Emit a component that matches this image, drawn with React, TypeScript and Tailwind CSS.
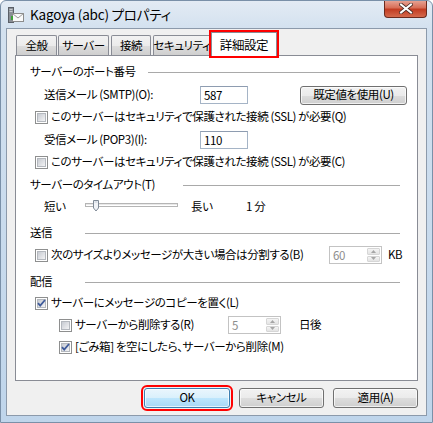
import React from "react";

function CheckBox({ checked = false }: { checked?: boolean }) {
  return (
    <svg width="13" height="13" viewBox="0 0 13 13" className="shrink-0">
      <defs>
        <linearGradient id={checked ? "cbg1" : "cbg0"} x1="0" y1="0" x2="1" y2="1">
          <stop offset="0" stopColor="#c4c8cf" />
          <stop offset="1" stopColor="#f6f6f7" />
        </linearGradient>
      </defs>
      <rect x="0.5" y="0.5" width="12" height="12" fill="#fff" stroke="#8e8f8f" />
      <rect x="2.5" y="2.5" width="8" height="8" fill={`url(#${checked ? "cbg1" : "cbg0"})`} stroke="#b4b8be" />
      {checked && (
        <path d="M3 6.2 L5.2 8.6 L10 3" fill="none" stroke="#3e5a9a" strokeWidth="1.8" />
      )}
    </svg>
  );
}

function Heading({ label, w }: { label: string; w: string }) {
  return (
    <div className="flex items-center pl-[14px] pr-[17px]">
      <div className={`${w} shrink-0`}>{label}</div>
      <div className="flex-1 h-px bg-[#a9a9a9]" />
    </div>
  );
}

function Spin({ value }: { value: string }) {
  return (
    <div className="w-[53px] h-[18px] shrink-0 flex border border-[#c3c3c3] bg-white">
      <div className="flex-1 pl-[3px] text-[#8d8d8d] leading-[16px]">{value}</div>
      <div className="w-[15px] flex flex-col gap-px p-px">
        <div className="flex-1 flex items-center justify-center bg-[linear-gradient(#f4f4f4,#e3e3e3)] border border-[#d6d6d6] rounded-[1px]">
          <svg width="5" height="3" viewBox="0 0 5 3"><path d="M0 3 L2.5 0 L5 3Z" fill="#a6a6a6" /></svg>
        </div>
        <div className="flex-1 flex items-center justify-center bg-[linear-gradient(#f4f4f4,#e3e3e3)] border border-[#d6d6d6] rounded-[1px]">
          <svg width="5" height="3" viewBox="0 0 5 3"><path d="M0 0 L2.5 3 L5 0Z" fill="#a6a6a6" /></svg>
        </div>
      </div>
    </div>
  );
}

function Btn({ label, w, primary = false, h = "h-[20px]" }: { label: string; w: string; primary?: boolean; h?: string }) {
  return (
    <div
      className={`${w} ${h} shrink-0 flex items-center justify-center rounded-[3px] border ${
        primary
          ? "border-[#3c7fb1] bg-[linear-gradient(to_bottom,#eaf6fd_0%,#d9f0fc_50%,#bee6fd_50%,#a7d9f5_100%)] outline-2 outline-offset-1 outline-[#ff0000]"
          : "border-[#707070] bg-[linear-gradient(to_bottom,#f2f2f2_0%,#ebebeb_50%,#dddddd_50%,#cfcfcf_100%)]"
      } shadow-[inset_0_0_0_1px_rgba(255,255,255,0.7)]`}
    >
      {label}
    </div>
  );
}

function Tab({ label, w, selected = false }: { label: string; w: string; selected?: boolean }) {
  if (selected) {
    return (
      <div
        className={`${w} h-[24px] shrink-0 flex items-start justify-center pt-[3px] bg-white border border-b-0 border-[#898c95] outline-2 outline-[#ff0000] text-[12.5px]`}
      >
        {label}
      </div>
    );
  }
  return (
    <div
      className={`${w} h-[20px] mb-px shrink-0 flex items-center justify-center border border-b-0 border-[#898c95] bg-[linear-gradient(to_bottom,#f2f2f2_0%,#ebebeb_50%,#dddddd_50%,#cfcfcf_100%)] rounded-t-[2px]`}
    >
      {label}
    </div>
  );
}

export default function App() {
  return (
    <div className="w-[433px] h-[423px] flex flex-col rounded-t-[6px] border border-[#7a90a8] bg-[linear-gradient(to_bottom,#e3ebf4_0px,#d3e1ef_28px,#bfd5eb_100%)] text-[11.5px] tracking-[-0.4px] whitespace-nowrap text-black font-['Noto_Sans_CJK_JP',sans-serif] [font-feature-settings:'palt'] overflow-hidden">
      {/* Title bar */}
      <div className="h-[27px] flex items-start justify-between pl-[7px] pr-[5px]">
        <div className="flex items-center gap-[6px] mt-[6px]">
          <svg width="16" height="16" viewBox="0 0 16 16">
            <rect x="0.5" y="0.5" width="5" height="15" fill="#8a8f96" stroke="#5b6068" />
            <rect x="1.5" y="2" width="3" height="1" fill="#c9ccd0" />
            <rect x="1.5" y="4" width="3" height="1" fill="#c9ccd0" />
            <rect x="4.5" y="6.5" width="11" height="8" fill="#fafafa" stroke="#8c8c8c" />
            <path d="M4.5 6.5 L10 11 L15.5 6.5" fill="none" stroke="#9a9a9a" />
            <rect x="3" y="9" width="2" height="4" fill="#3fa13a" />
          </svg>
          <span className="text-[13.5px] tracking-[-0.2px] leading-none">Kagoya (abc) プロパティ</span>
        </div>
        <div className="w-[43px] h-[18px] -mt-px flex items-center justify-center rounded-b-[4px] border border-t-0 border-[#6b2a1e] bg-[linear-gradient(to_bottom,#e8a89a_0%,#d86f58_45%,#c23c22_55%,#d4694c_100%)]">
          <svg width="14" height="11" viewBox="0 0 14 11">
            <path d="M2 1.5 L12 9.5 M12 1.5 L2 9.5" stroke="#4a2a24" strokeWidth="3.6" strokeLinecap="square" />
            <path d="M2 1.5 L12 9.5 M12 1.5 L2 9.5" stroke="#ffffff" strokeWidth="2" strokeLinecap="square" />
          </svg>
        </div>
      </div>

      {/* Client area */}
      <div className="mx-[5px] mb-[6px] flex-1 flex flex-col border border-[#8c9aab] bg-[#f0f0f0] px-[8px]">
        {/* Tabs */}
        <div className="h-[24px] mt-[3px] -mb-px relative z-10 flex items-end pl-px">
          <Tab label="全般" w="w-[41px]" />
          <div className="w-[1px]" />
          <Tab label="サーバー" w="w-[51px]" />
          <div className="w-[2px]" />
          <Tab label="接続" w="w-[40px]" />
          <div className="w-[2px]" />
          <Tab label="セキュリティ" w="w-[58px]" />
          <Tab label="詳細設定" w="w-[66px]" selected />
        </div>

        {/* Panel */}
        <div className="flex-1 flex flex-col border border-[#898c95] bg-white pt-[6px]">
          <div className="h-[20px] flex flex-col justify-center">
            <Heading label="サーバーのポート番号" w="w-[118px]" />
          </div>

          <div className="mt-[2px] h-[22px] flex items-center pl-[28px]">
            <div className="w-[156px] shrink-0">送信メール (SMTP)(O):</div>
            <div className="w-[48px] h-[18px] shrink-0 border border-[#a5b4c6] border-t-[#8e9cb0] bg-white pl-[3px] leading-[16px]">587</div>
            <div className="w-[52px] shrink-0" />
            <Btn label="既定値を使用(U)" w="w-[107px]" h="h-[19px]" />
          </div>

          <div className="h-[22px] flex items-center gap-[3px] pl-[19px]">
            <CheckBox />
            <span>このサーバーはセキュリティで保護された接続 (SSL) が必要(Q)</span>
          </div>

          <div className="mt-px h-[22px] flex items-center pl-[28px]">
            <div className="w-[156px] shrink-0">受信メール (POP3)(I):</div>
            <div className="w-[48px] h-[18px] shrink-0 border border-[#a5b4c6] border-t-[#8e9cb0] bg-white pl-[3px] leading-[16px]">110</div>
          </div>

          <div className="h-[22px] flex items-center gap-[3px] pl-[19px]">
            <CheckBox />
            <span>このサーバーはセキュリティで保護された接続 (SSL) が必要(C)</span>
          </div>

          <div className="mt-px h-[22px] flex flex-col justify-center">
            <Heading label="サーバーのタイムアウト(T)" w="w-[153px]" />
          </div>

          <div className="h-[22px] flex items-center pl-[28px]">
            <div className="w-[41px] shrink-0">短い</div>
            <svg width="93" height="14" viewBox="0 0 93 14" className="shrink-0 -mt-[2px]">
              <rect x="0.5" y="4.5" width="92" height="3" fill="#e8e8e8" stroke="#b5b5b5" />
              <rect x="1" y="6" width="91" height="1" fill="#ffffff" />
              <path d="M8.5 1.5 H13.5 V9 L11 12 L8.5 9 Z" fill="#f0f3f7" stroke="#7f8a97" />
              <path d="M9.5 3 H12.5" stroke="#c3cbd6" />
            </svg>
            <div className="w-[13px] shrink-0" />
            <div className="w-[55px] shrink-0">長い</div>
            <div>1 分</div>
          </div>

          <div className="mt-[4px] h-[22px] flex flex-col justify-center">
            <Heading label="送信" w="w-[55px]" />
          </div>

          <div className="h-[22px] flex items-center pl-[19px]">
            <div className="w-[294px] shrink-0 flex items-center gap-[3px]">
              <CheckBox />
              <span>次のサイズよりメッセージが大きい場合は分割する(B)</span>
            </div>
            <Spin value="60" />
            <div className="w-[6px] shrink-0" />
            <div>KB</div>
          </div>

          <div className="mt-[6px] h-[20px] flex flex-col justify-center">
            <Heading label="配信" w="w-[55px]" />
          </div>

          <div className="h-[22px] flex items-center gap-[3px] pl-[19px]">
            <CheckBox checked />
            <span>サーバーにメッセージのコピーを置く(L)</span>
          </div>

          <div className="h-[22px] flex items-center pl-[43px]">
            <div className="w-[169px] shrink-0 flex items-center gap-[3px]">
              <CheckBox />
              <span>サーバーから削除する(R)</span>
            </div>
            <Spin value="5" />
            <div className="w-[18px] shrink-0" />
            <div>日後</div>
          </div>

          <div className="h-[22px] flex items-center gap-[3px] pl-[43px]">
            <CheckBox checked />
            <span>[ごみ箱] を空にしたら、サーバーから削除(M)</span>
          </div>
        </div>

        {/* Buttons */}
        <div className="mt-[7px] mb-[7px] h-[20px] flex justify-end gap-[9px]">
          <Btn label="OK" w="w-[86px]" primary />
          <Btn label="キャンセル" w="w-[85px]" />
          <Btn label="適用(A)" w="w-[85px]" />
        </div>
      </div>
    </div>
  );
}
